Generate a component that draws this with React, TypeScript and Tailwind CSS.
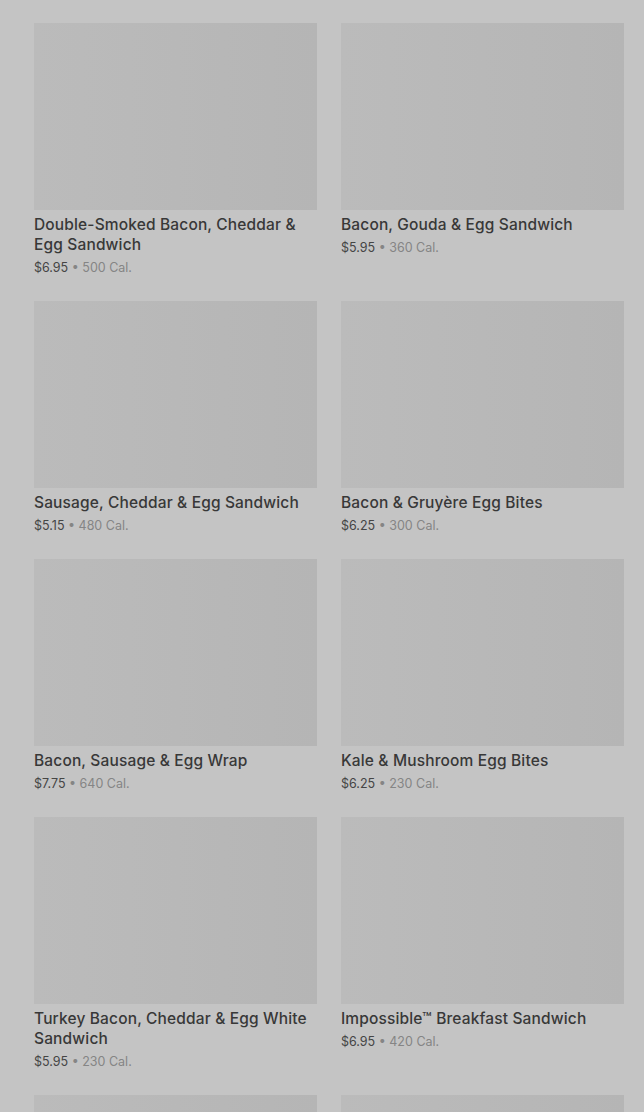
import React from "react";

const items = [
  { name: "Double-Smoked Bacon, Cheddar & Egg Sandwich", price: "$6.95", cal: "500 Cal." },
  { name: "Bacon, Gouda & Egg Sandwich", price: "$5.95", cal: "360 Cal." },
  { name: "Sausage, Cheddar & Egg Sandwich", price: "$5.15", cal: "480 Cal." },
  { name: "Bacon & Gruyère Egg Bites", price: "$6.25", cal: "300 Cal." },
  { name: "Bacon, Sausage & Egg Wrap", price: "$7.75", cal: "640 Cal." },
  { name: "Kale & Mushroom Egg Bites", price: "$6.25", cal: "230 Cal." },
  { name: "Turkey Bacon, Cheddar & Egg White Sandwich", price: "$5.95", cal: "230 Cal." },
  { name: "Impossible™ Breakfast Sandwich", price: "$6.95", cal: "420 Cal." },
  { name: "", price: "", cal: "" },
  { name: "", price: "", cal: "" },
];

export default function App() {
  return (
    <div
      className="w-[644px] h-[1112px] overflow-hidden bg-[#c4c4c4]"
      style={{ fontFamily: "Inter, 'Noto Sans', sans-serif" }}
    >
      <div className="grid grid-cols-2 gap-x-[24px] gap-y-[23px] pl-[34px] pr-[20px] pt-[23px]">
        {items.map((it, i) => (
          <div key={i} className="flex flex-col">
            <div className="h-[187px] bg-gradient-to-r from-[#bbbbbb] to-[#b5b5b5]" />
            {it.name && (
              <>
                <div className="mt-[5px] text-[15.5px] leading-[20px] font-medium text-[#383838] tracking-[0.15px]">
                  {it.name}
                </div>
                <div className="mt-[3px] text-[12.5px] leading-[20px] text-[#454545]">
                  {it.price}
                  <span className="text-[#858585]"> • {it.cal}</span>
                </div>
              </>
            )}
          </div>
        ))}
      </div>
    </div>
  );
}
